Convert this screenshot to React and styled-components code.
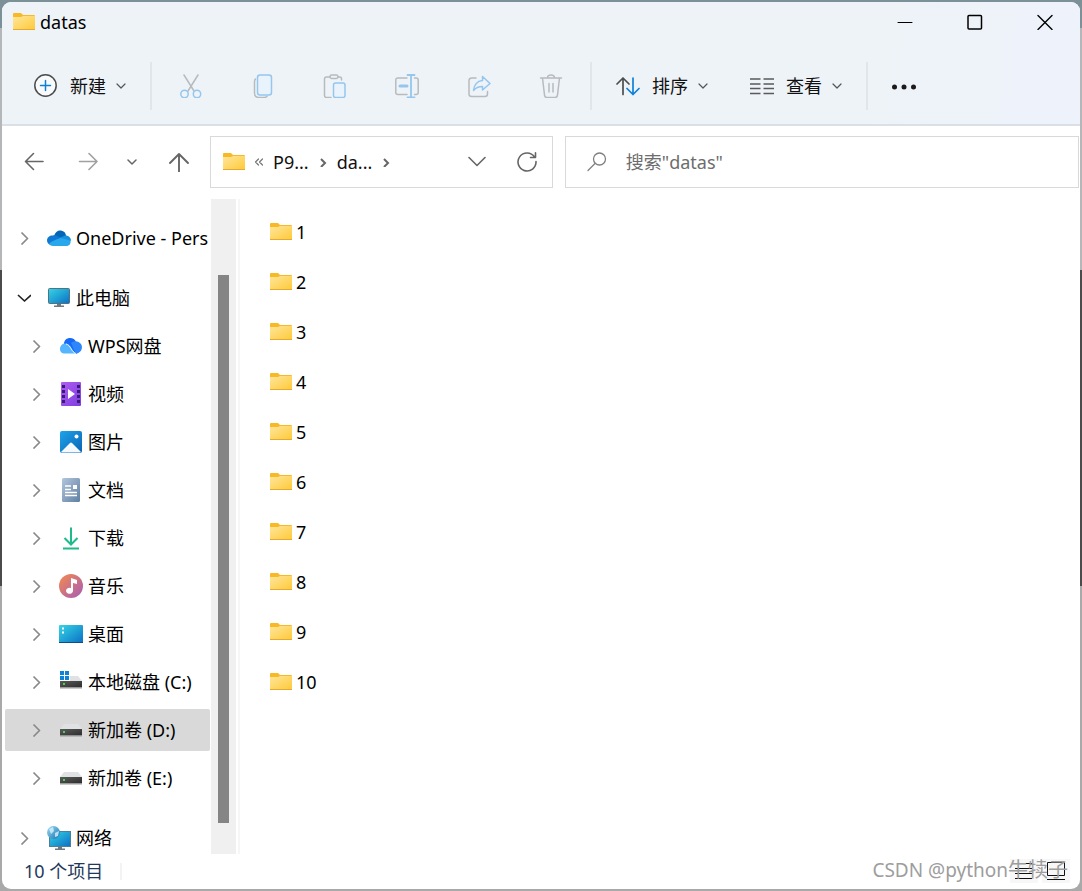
import React from 'react';
import styled, { createGlobalStyle, css } from 'styled-components';

const GlobalStyle = createGlobalStyle`
  * { box-sizing: border-box; }
  body {
    margin: 0;
    background: linear-gradient(#7c9197 0 28px, #b4b6b8 28px 270px, #4b4b4b 270px 586px, #a9a9a9 586px);
    font-family: 'Noto Sans', 'Noto Sans CJK SC', sans-serif;
    font-size: 18px;
    line-height: 24px;
    color: #111;
  }
  button, input { font: inherit; color: inherit; border: 0; background: none; padding: 0; margin: 0; }
  a { color: inherit; text-decoration: none; }
  ul { list-style: none; margin: 0; padding: 0; }
  svg { display: block; flex: none; }
`;

const Desktop = styled.div`
  height: 100vh;
  padding: 2px;
`;

const Window = styled.main`
  position: relative;
  display: flex;
  flex-direction: column;
  height: 100%;
  border-radius: 9px;
  overflow: hidden;
  background: #fff;
`;

const Header = styled.header`
  background: linear-gradient(100deg, #eef3f8 80%, #eef2fb);
  border-bottom: 2px solid #dae0e5;
`;

const TitleBar = styled.div`
  display: flex;
  justify-content: space-between;
  height: 40px;
`;

const Title = styled.h1`
  display: flex;
  align-items: center;
  gap: 5px;
  margin: 0;
  padding-left: 11px;
  font-size: 18px;
  font-weight: 400;
  color: #000;
`;

const WindowControls = styled.div`
  display: flex;
`;

const ControlButton = styled.button`
  display: grid;
  place-items: center;
  width: 70px;
`;

const Toolbar = styled.div`
  display: flex;
  align-items: center;
  height: 82px;
  padding: 6px 0 0 11px;
`;

const ToolButton = styled.button`
  display: flex;
  align-items: center;
  gap: 12px;
  height: 48px;
  padding: 0 21px;
  white-space: nowrap;
`;

const ToolLabel = styled.span`
  display: flex;
  align-items: center;
  gap: 10px;
`;

const ToolIconButton = styled.button`
  display: grid;
  place-items: center;
  width: 72px;
  height: 48px;
`;

const Divider = styled.span`
  flex: none;
  width: 2px;
  height: ${(p) => p.$height || 48}px;
  margin: 0 3px;
  background: ${(p) => (p.$faint ? '#f3f3f3' : '#e0e6ea')};
`;

const AddressRow = styled.div`
  display: flex;
  padding: 10px 1px 11px 0;
`;

const NavButtons = styled.nav`
  display: flex;
  flex: none;
  width: 208px;
  padding-left: 5px;
`;

const NavButton = styled.button`
  display: grid;
  place-items: center;
  width: ${(p) => p.$width || 54}px;
`;

const Fields = styled.div`
  display: grid;
  flex: 1;
  grid-template-columns: minmax(0, 2fr) minmax(0, 3fr);
  gap: 12px;
`;

const Field = styled.div`
  display: flex;
  align-items: center;
  min-width: 0;
  height: 52px;
  border: 1px solid #d9d9d9;
`;

const Crumbs = styled.div`
  display: flex;
  flex: 1;
  align-items: center;
  gap: 9px;
  padding-left: 12px;
`;

const FieldButton = styled.button`
  display: grid;
  place-items: center;
  width: 50px;
  height: 50px;
`;

const SearchField = styled(Field).attrs({ as: 'label' })`
  gap: 19px;
  padding-left: 21px;
`;

const SearchInput = styled.input`
  flex: 1;
  min-width: 0;
  outline: none;
  &::placeholder { color: #6d6d6d; opacity: 1; }
`;

const Body = styled.div`
  display: flex;
  flex: 1;
  min-height: 0;
`;

const Sidebar = styled.nav`
  flex: none;
  width: 209px;
  padding: 15px 1px 0 3px;
  overflow: hidden;
`;

const TreeGroup = styled.ul`
  margin-bottom: 12px;
`;

const TreeItem = styled.li`
  padding: 3px 0;
`;

const TreeLink = styled.a`
  display: flex;
  align-items: center;
  height: 42px;
  padding-left: ${(p) => (p.$nested ? 24 : 12)}px;
  border-radius: 2px;
  white-space: nowrap;
  overflow: hidden;
  color: #000;
  ${(p) => p.$selected && css`background: #d9d9d9;`}
`;

const TreeIcon = styled.span`
  flex: none;
  margin: 0 5px 0 16px;
`;

const ScrollTrack = styled.div`
  display: flex;
  flex: none;
  width: 25px;
  padding: 76px 7px 31px;
  background: #f0f0f0;
`;

const ScrollThumb = styled.div`
  flex: 1;
  background: #858585;
`;

const Files = styled.ul`
  flex: 1;
  margin-left: 2px;
  padding: 8px 0 0 30px;
  border-left: 2px solid #f6f6f6;
`;

const FileLink = styled.a`
  display: inline-flex;
  align-items: center;
  gap: 4px;
  height: 50px;
  color: #000;
  vertical-align: top;
`;

const StatusBar = styled.footer`
  display: flex;
  flex: none;
  align-items: center;
  height: 35px;
  padding: 0 10px 1px 22px;
  color: #1e395b;
`;

const StatusText = styled.span`
  margin-right: 14px;
`;

const ViewButtons = styled.div`
  display: flex;
  gap: 4px;
  margin-left: auto;
`;

const ViewButton = styled.button`
  display: grid;
  place-items: center;
  width: 28px;
  height: 24px;
  background: #f7f7f7;
`;

const Watermark = styled.span`
  position: absolute;
  right: 12px;
  bottom: 7px;
  font-size: 19px;
  color: #9d9d9d;
  pointer-events: none;
`;

const WatermarkName = styled.span`
  font-size: 20px;
`;

const Defs = styled.svg`
  position: absolute;
  width: 0;
  height: 0;
`;

const Stroke = ({ w = 24, h = 24, color = '#555', sw = 1.6, children, ...rest }) => (
  <svg width={w} height={h} viewBox={`0 0 ${w} ${h}`} fill="none" stroke={color} strokeWidth={sw}
    strokeLinecap="round" strokeLinejoin="round" aria-hidden="true" {...rest}>{children}</svg>
);

const Folder = () => (
  <svg width="22" height="20" viewBox="0 0 22 20" aria-hidden="true">
    <path d="M0 2Q0 1 1 1H8L10 3H21Q22 3 22 4V9H0Z" fill="#f9b826" />
    <path d="M0 5H8L10 4H22V17.500H0Z" fill="url(#folderFill)" />
    <path d="M0 17.500H22" stroke="#e6a832" />
  </svg>
);

const gradients = {
  folderFill: ['#ffe69c', '#ffca38'],
  screenFill: ['#35d6e6', '#0b6fc4'],
  videoFill: ['#b05cf0', '#7d3fe0'],
  pictureFill: ['#1ea4ea', '#0a63b4'],
  documentFill: ['#b3c6dc', '#5f7fa3'],
  musicFill: ['#f58b4c', '#a65bb8'],
  globeFill: ['#9cdcf5', '#1672b0'],
  driveFill: ['#5a5a5a', '#2d2d2d'],
};

const GradientDefs = () => (
  <Defs aria-hidden="true">
    <defs>
      {Object.entries(gradients).map(([id, [from, to]]) => (
        <linearGradient key={id} id={id} x1="0" y1="0" x2="1" y2="1">
          <stop stopColor={from} />
          <stop offset="1" stopColor={to} />
        </linearGradient>
      ))}
    </defs>
  </Defs>
);

const Small = ({ children }) => (
  <svg width="24" height="24" viewBox="0 0 24 24" fill="none" aria-hidden="true">{children}</svg>
);

const DriveShape = () => (
  <>
    <path d="M5 6H19L23 11H1Z" fill="#dfe1e3" />
    <path d="M1 11H23V17.500H1Z" fill="url(#driveFill)" />
    <path d="M1 18H23" stroke="#999" />
    <rect x="4" y="13" width="2" height="2" fill="#3ddc3d" />
  </>
);

const treeIcons = {
  onedrive: (
    <Small>
      <path d="M7 10C8 6 11 4 14 4.500C17 5 19 7 19 10L13 14Z" fill="#0364b8" />
      <path d="M5 19C2 19 0 17 0 14.500C0 11.500 2.500 9.500 5.500 9.500C8 9 10 9.500 12 11L18 14Z" fill="#0f78d4" />
      <path d="M12 12L17 10C20 8.500 24 11 24 14.500L20 17Z" fill="#1490df" />
      <path d="M2 18C4 15 9 14 13 12C17 13 20 13 23.500 15C24 18 22 20 19 20H6C4 20 3 19 2 18Z" fill="#28a8ea" />
    </Small>
  ),
  pc: (
    <Small>
      <rect x="1.500" y="2.500" width="21" height="15" rx="1" fill="url(#screenFill)" stroke="#57707e" />
      <path d="M10 18H14V19.500H17V21H7V19.500H10Z" fill="#70797f" />
    </Small>
  ),
  wps: (
    <Small>
      <path d="M5 10C5 6 8 4 11 4C14 4 16 5.500 17 8L18 20C13 18 12 11 5 10Z" fill="#1769f5" />
      <path d="M12 9C15 6 20 7 22 10C24 13 23 18 18 19.500C15 18 14 13 12 9Z" fill="#2d86fb" />
      <path d="M6 9.500C9 9.500 11 11 12.500 14C14 17 15 19 18 19.500H6C2.500 19.500 1 17.500 1 15C1 12 3 9.500 6 9.500Z" fill="#55b5ff" />
      <path d="M7 10C12 11 12 18 17 19.500" stroke="#fff" strokeWidth=".8" />
    </Small>
  ),
  video: (
    <Small>
      <rect x="2" y="0" width="20" height="24" rx="1" fill="url(#videoFill)" />
      {[3, 8, 13, 18].map((y) => (
        <g key={y} fill="#3a1a78"><rect x="3" y={y} width="3" height="3" /><rect x="18" y={y} width="3" height="3" /></g>
      ))}
      <path d="M9 7L16 12L9 17Z" fill="#fff" />
    </Small>
  ),
  picture: (
    <Small>
      <rect x="1" y="1" width="22" height="22" rx="2" fill="url(#pictureFill)" />
      <path d="M2 22L11 13Q12 12 13 13L22 22Q21 22.500 20 22.500H4Q3 22.500 2 22Z" fill="#f4f9fd" />
      <circle cx="17.500" cy="6.500" r="2" fill="#fff" />
    </Small>
  ),
  document: (
    <Small>
      <rect x="3" y="0" width="18" height="24" rx="1.500" fill="url(#documentFill)" />
      <path d="M6 8H12M6 11.500H12M6 14.500H18M6 17.500H18" stroke="#fff" strokeWidth="1.400" />
      <rect x="14" y="7" width="4" height="4" fill="#fff" />
    </Small>
  ),
  download: (
    <Small>
      <path d="M12 1.500V18M5.500 12L12 18.500L18.500 12" stroke="#1dbb8c" strokeWidth="2" />
      <path d="M4 22.500H20" stroke="#1dbb8c" strokeWidth="2" />
    </Small>
  ),
  music: (
    <Small>
      <circle cx="12" cy="12" r="12" fill="url(#musicFill)" />
      <path d="M12 4L18 6V10L14 9V17A3.500 3 0 1 1 12 14Z" fill="#fff" />
    </Small>
  ),
  desktop: (
    <Small>
      <rect x="0" y="3" width="24" height="18" rx="1" fill="url(#screenFill)" />
      <path d="M0 20.500H24" stroke="#0b4f86" />
      <path d="M3 6.500H5M3 10.500H5" stroke="#fff" strokeWidth="2" />
    </Small>
  ),
  system: (
    <Small>
      <DriveShape />
      <path d="M0 0H11V11H0Z" fill="#fff" />
      <path d="M1 1H5V5H1ZM6 1H10V5H6ZM1 6H5V10H1ZM6 6H10V10H6Z" fill="#0c83d6" />
    </Small>
  ),
  drive: <Small><DriveShape /></Small>,
  network: (
    <Small>
      <rect x="2.500" y="5.500" width="21" height="15" fill="url(#screenFill)" stroke="#4d7f96" />
      <path d="M11 21H15V22.500H18V24H8V22.500H11Z" fill="#70797f" />
      <circle cx="6.500" cy="6.500" r="6.500" fill="url(#globeFill)" />
      <path d="M2 3L6 1L7 5L4 8ZM8 7L12 5L11 10L8 11Z" fill="#d9f2fc" opacity=".8" />
    </Small>
  ),
};

const ChevronDown = ({ size = 10, color = '#555', sw = 1.2 }) => (
  <Stroke w={size} h={size} color={color} sw={sw}>
    <path d={`M1 ${size * 0.3}L${size / 2} ${size * 0.7}L${size - 1} ${size * 0.3}`} />
  </Stroke>
);

const TreeChevron = ({ open }) => (
  <Stroke w={14} h={14} color={open ? '#222' : '#8a8a8a'} sw={1.7} strokeLinecap="butt">
    <path d={open ? 'M1 4L7.500 10L14 4' : 'M4.500 1.500L10.500 7.500L4.500 13.500'} />
  </Stroke>
);

const CrumbChevron = () => (
  <Stroke w={10} h={10} color="#666" sw={2} strokeLinecap="butt" strokeLinejoin="miter">
    <path d="M3 2L7 6L3 10" />
  </Stroke>
);

const GREY = '#b7bbbe';
const BLUE = '#94c6ee';

const editTools = [
  ['剪切', <>
    <path d="M5 1L15 17M19 1L9 17" stroke={GREY} />
    <circle cx="5.500" cy="20" r="3.700" stroke={BLUE} /><circle cx="18" cy="20" r="3.700" stroke={BLUE} />
  </>],
  ['复制', <>
    <path d="M4.500 5C3.500 5.500 3.500 6 3.500 8V19Q3.500 23.500 8 23.500H13Q15 23.500 16 22.500" stroke={GREY} />
    <rect x="6.500" y="1" width="14" height="20" rx="2.500" stroke={BLUE} fill="#e9f3fb" />
  </>],
  ['粘贴', <>
    <path d="M7 3H3.500Q1.500 3 1.500 5V21.500Q1.500 23.500 3.500 23.500H8M15 3H17Q18.500 3 18.500 5V6" stroke={GREY} />
    <rect x="7" y="1" width="8" height="3.500" rx="1.700" stroke={GREY} />
    <rect x="10.500" y="9" width="11.500" height="14.500" rx="2" stroke={BLUE} fill="#e9f3fb" />
  </>],
  ['重命名', <>
    <path d="M12 4H3Q.8 4 .8 6V18.500Q.8 20.500 3 20.500H12M19.500 4H21Q23.200 4 23.200 6V18.500Q23.200 20.500 21 20.500H19.500" stroke={GREY} />
    <path d="M16 1V23.500M12.500 1H19.500M12.500 23.500H19.500" stroke={BLUE} strokeWidth="1.800" />
    <path d="M5 12H12" stroke={BLUE} strokeWidth="3" />
  </>],
  ['共享', <>
    <path d="M9 4H5Q2 4 2 6.500V20Q2 22.500 4.500 22.500H18Q20.500 22.500 20.500 20V17.500" stroke={GREY} />
    <path d="M15.500 2.500L23 9.500L15.500 16V12.500C11 12.500 8.500 14 6.500 16.500C7 11.500 10 7 15.500 6.500Z" stroke={BLUE} />
  </>],
  ['删除', <>
    <path d="M1.500 4H22.500M8.500 4C8.500 0 15.500 0 15.500 4M3.500 4L5.500 21Q5.700 23.500 8 23.500H16Q18.300 23.500 18.500 21L20.500 4M10 9.500V18M14 9.500V18" stroke={GREY} />
  </>],
];

const nested = [
  ['WPS网盘', 'wps'], ['视频', 'video'], ['图片', 'picture'], ['文档', 'document'], ['下载', 'download'],
  ['音乐', 'music'], ['桌面', 'desktop'], ['本地磁盘 (C:)', 'system'], ['新加卷 (D:)', 'drive', true], ['新加卷 (E:)', 'drive'],
];

const files = Array.from({ length: 10 }, (_, i) => String(i + 1));

const TreeRow = ({ label, icon, isNested, open, selected }) => (
  <TreeItem>
    <TreeLink href="#" $nested={isNested} $selected={selected} aria-current={selected ? 'true' : undefined}>
      <TreeChevron open={open} />
      <TreeIcon>{treeIcons[icon]}</TreeIcon>
      {label}
    </TreeLink>
  </TreeItem>
);

const ToolMenu = ({ label, icon }) => (
  <ToolButton type="button">
    {icon}
    <ToolLabel>{label}<ChevronDown /></ToolLabel>
  </ToolButton>
);

export default function App() {
  return (
    <Desktop>
      <GlobalStyle />
      <GradientDefs />
      <Window>
        <Header>
          <TitleBar>
            <Title><Folder />datas</Title>
            <WindowControls>
              <ControlButton type="button" aria-label="最小化">
                <Stroke w={16} h={16} color="#000" sw={1}><path d="M1 8.500H15" /></Stroke>
              </ControlButton>
              <ControlButton type="button" aria-label="最大化">
                <Stroke w={16} h={16} color="#000" sw={1.5}><rect x="1" y="1.500" width="13.500" height="13.500" rx="1" /></Stroke>
              </ControlButton>
              <ControlButton type="button" aria-label="关闭">
                <Stroke w={16} h={16} color="#000" sw={1.4}><path d="M1 1.500L15 15.500M15 1.500L1 15.500" /></Stroke>
              </ControlButton>
            </WindowControls>
          </TitleBar>
          <Toolbar>
            <ToolMenu label="新建" icon={
              <Stroke color="#4d4d4d" sw={1.5}>
                <circle cx="11.500" cy="11.500" r="10.700" fill="#f8fafc" />
                <path d="M11.500 6.500V16.500M6.500 11.500H16.500" stroke="#0f7fd0" />
              </Stroke>
            } />
            <Divider />
            {editTools.map(([label, art]) => (
              <ToolIconButton key={label} type="button" aria-label={label} disabled>
                <Stroke sw={1.5}>{art}</Stroke>
              </ToolIconButton>
            ))}
            <Divider />
            <ToolMenu label="排序" icon={
              <Stroke color="#4d4d4d" sw={1.7}>
                <path d="M7 20.500V4M1 10L7 4L13 10" />
                <path d="M17 4V20.500M11 14.500L17 20.500L23 14.500" stroke="#0f7fd8" />
              </Stroke>
            } />
            <ToolMenu label="查看" icon={
              <Stroke color="#5a5a5a" sw={1.4} strokeLinecap="butt">
                <path d="M0 5H10.500M13.500 5H24M0 10H10.500M13.500 10H24M0 14.500H10.500M13.500 14.500H24M0 19.500H10.500M13.500 19.500H24" />
              </Stroke>
            } />
            <Divider />
            <ToolButton type="button" aria-label="查看更多">
              <svg width="24" height="24" viewBox="0 0 24 24" fill="#1a1a1a" aria-hidden="true">
                <circle cx="2.500" cy="13" r="2.500" /><circle cx="12" cy="13" r="2.500" /><circle cx="21.500" cy="13" r="2.500" />
              </svg>
            </ToolButton>
          </Toolbar>
        </Header>

        <AddressRow>
          <NavButtons aria-label="导航">
            <NavButton type="button" aria-label="后退">
              <Stroke w={20} h={20} color="#666" sw={1.6}><path d="M19 9.500H1.500M9.500 1.500L1.500 9.500L9.500 17.500" /></Stroke>
            </NavButton>
            <NavButton type="button" aria-label="前进">
              <Stroke w={20} h={20} color="#a0a0a0" sw={1.6}><path d="M1.500 9.500H19M11 1.500L19 9.500L11 17.500" /></Stroke>
            </NavButton>
            <NavButton type="button" aria-label="最近浏览的位置" $width={34}><ChevronDown color="#666" sw={1.5} /></NavButton>
            <NavButton type="button" aria-label="向上" $width={60}>
              <Stroke w={20} h={20} color="#666" sw={1.9}><path d="M10 19.500V2M1 11L10 2L19 11" /></Stroke>
            </NavButton>
          </NavButtons>
          <Fields>
            <Field>
              <Crumbs>
                <Folder />
                <Stroke w={10} h={10} color="#777" sw={1.2}><path d="M4.500 2L1.500 5L4.500 8M8.500 2L5.500 5L8.500 8" /></Stroke>
                <button type="button">P9...</button>
                <CrumbChevron />
                <button type="button">da...</button>
                <CrumbChevron />
              </Crumbs>
              <FieldButton type="button" aria-label="以前的位置">
                <Stroke w={18} h={18} color="#666" sw={1.6}><path d="M1 4.500L9 12.500L17 4.500" /></Stroke>
              </FieldButton>
              <FieldButton type="button" aria-label="刷新">
                <Stroke w={20} h={20} color="#666" sw={1.6}>
                  <path d="M17.500 5A9 9 0 1 0 19 9.500M18.500 .8V5.500H13.500" />
                </Stroke>
              </FieldButton>
            </Field>
            <SearchField>
              <Stroke w={20} h={20} color="#808080" sw={1.3}>
                <circle cx="12.500" cy="7" r="6" /><path d="M8 11.500L1 18.500" />
              </Stroke>
              <SearchInput type="text" aria-label="搜索" placeholder={'搜索"datas"'} />
            </SearchField>
          </Fields>
        </AddressRow>

        <Body>
          <Sidebar aria-label="文件夹">
            <TreeGroup><TreeRow label="OneDrive - Pers" icon="onedrive" /></TreeGroup>
            <TreeGroup>
              <TreeRow label="此电脑" icon="pc" open />
              {nested.map(([label, icon, selected]) => (
                <TreeRow key={label} label={label} icon={icon} selected={selected} isNested />
              ))}
            </TreeGroup>
            <TreeGroup><TreeRow label="网络" icon="network" /></TreeGroup>
          </Sidebar>
          <ScrollTrack><ScrollThumb /></ScrollTrack>
          <Files>
            {files.map((name) => (
              <li key={name}><FileLink href="#"><Folder />{name}</FileLink></li>
            ))}
          </Files>
        </Body>

        <StatusBar>
          <StatusText>10 个项目</StatusText>
          <Divider $height={17} $faint />
          <ViewButtons>
            <ViewButton type="button" aria-label="详细信息">
              <Stroke w={18} h={18} color="#111" sw={1} strokeLinecap="butt">
                <path d="M0 1.500H17M0 6.500H17M0 11.500H17M0 16.500H17" />
              </Stroke>
            </ViewButton>
            <ViewButton type="button" aria-label="大图标">
              <Stroke w={18} h={18} color="#111" sw={1} strokeLinecap="butt">
                <path d="M.5 .5H17.500V13.500H.5ZM0 17.500H18" />
              </Stroke>
            </ViewButton>
          </ViewButtons>
        </StatusBar>
        <Watermark>CSDN @python<WatermarkName>牛犊子</WatermarkName></Watermark>
      </Window>
    </Desktop>
  );
}
